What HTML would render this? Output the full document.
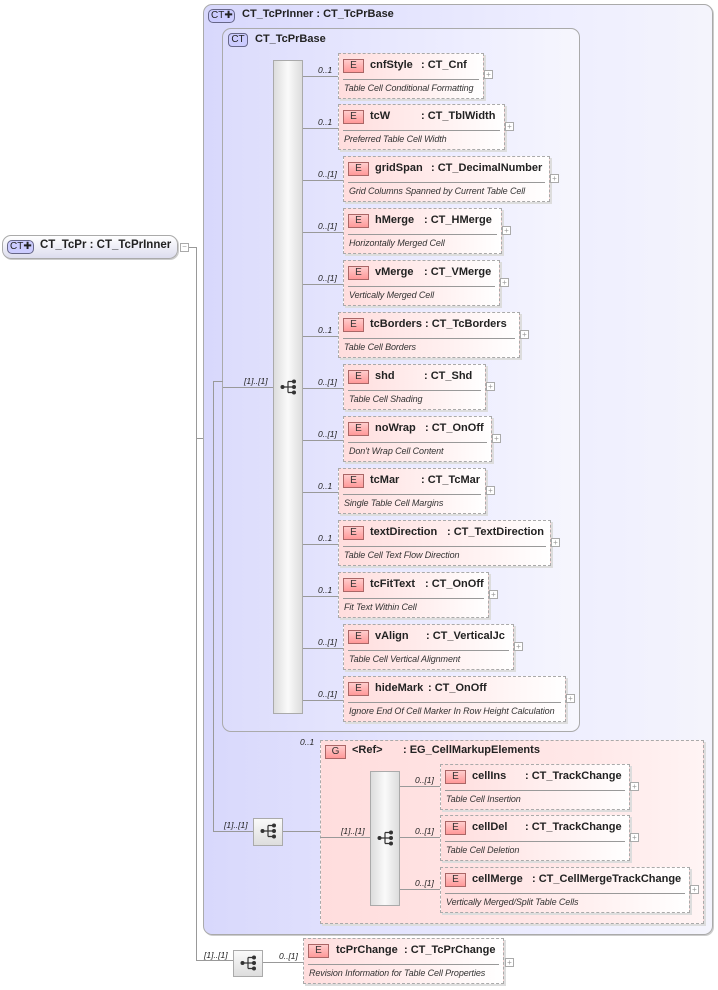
<!DOCTYPE html><html><head><meta charset="utf-8"><style>
*{margin:0;padding:0;box-sizing:border-box}
body{width:718px;height:990px;background:#fff;position:relative;overflow:hidden;font-family:"Liberation Sans",sans-serif;color:#222}
.a{position:absolute}
.el{position:absolute;height:46px;border:1px dashed #aaa;background:linear-gradient(90deg,#fdd 0%,#fff0f0 60%,#fff 100%);box-shadow:2px 2px 0 #ddd}
.b{position:absolute;left:4px;top:5px;width:21px;height:14px;border:1px solid #a66;background:linear-gradient(#fcc,#f99);font-size:10px;text-align:center;line-height:12px;color:#333}
.n{position:absolute;top:5px;font-size:11px;font-weight:bold;white-space:nowrap}
.l{position:absolute;left:4px;right:4px;top:25px;border-top:1px solid #999}
.d{position:absolute;left:5px;top:29px;font-size:9px;font-style:italic;white-space:nowrap;color:#333;letter-spacing:-0.1px}
.p{position:absolute;width:9px;height:9px;border:1px solid #aaa;background:#fff;font-size:8px;line-height:7px;text-align:center;color:#999}
.o{position:absolute;font-size:8.5px;font-style:italic;white-space:nowrap}
.h{position:absolute;height:1px;background:#999}
.v{position:absolute;width:1px;background:#999}
.seq{position:absolute;border:1px solid #aaa;background:linear-gradient(90deg,#ddd,#fafafa 50%,#ddd)}
.sq{position:absolute;width:30px;height:28px;border:1px solid #aaa;background:linear-gradient(#fafafa,#ddd)}
</style></head><body>
<svg width="0" height="0" style="position:absolute"><defs><g id="si"><circle cx="2.5" cy="8" r="2" fill="#333"/><path d="M2 8H8M8 2.5V13.5M8 2.5H14M8 8H14M8 13.5H14" stroke="#333" stroke-width="1.2" fill="none"/><circle cx="14" cy="2.5" r="2" fill="#333"/><circle cx="14" cy="8" r="2" fill="#333"/><circle cx="14" cy="13.5" r="2" fill="#333"/></g></defs></svg>

<div class="a" style="left:2px;top:235px;width:176px;height:24px;border:1px solid #aaa;border-radius:9px;background:linear-gradient(#fff,#dde);box-shadow:1px 1px 0 #ccc"></div>
<div class="a" style="left:7px;top:240px;width:27px;height:14px;border:1px solid #668;border-radius:5px;background:#ccf;font-size:10px;line-height:12px;padding-left:2px">CT✚</div>
<div class="a" style="left:40px;top:239px;font-size:11.5px;font-weight:bold">CT_TcPr : CT_TcPrInner</div>
<div class="p" style="left:180px;top:243px;line-height:5px">−</div>
<div class="h" style="left:189px;top:247px;width:7px"></div>
<div class="v" style="left:196px;top:247px;height:714px"></div>
<div class="h" style="left:196px;top:438px;width:8px"></div>

<div class="a" style="left:203px;top:4px;width:510px;height:931px;border:1px solid #aaa;border-radius:9px;background:linear-gradient(90deg,#d8d8fc,#eef 70%,#f4f4fc);box-shadow:1px 1px 0 #ccc"></div>
<div class="a" style="left:208px;top:9px;width:27px;height:14px;border:1px solid #668;border-radius:5px;background:#ccf;font-size:10px;line-height:12px;padding-left:2px">CT✚</div>
<div class="a" style="left:242px;top:8px;font-size:11px;font-weight:bold">CT_TcPrInner : CT_TcPrBase</div>
<div class="a" style="left:222px;top:28px;width:358px;height:704px;border:1px solid #aaa;border-radius:9px;background:linear-gradient(90deg,#dcdcfc,#eef 70%,#f6f6fd)"></div>
<div class="a" style="left:228px;top:33px;width:20px;height:14px;border:1px solid #668;border-radius:4px;background:#ccf;font-size:10px;line-height:12px;text-align:center">CT</div>
<div class="a" style="left:255px;top:33px;font-size:11px;font-weight:bold">CT_TcPrBase</div>

<div class="v" style="left:213px;top:381px;height:451px"></div>
<div class="h" style="left:213px;top:381px;width:10px"></div>
<div class="h" style="left:223px;top:387px;width:50px"></div>
<div class="o" style="left:244px;top:376px">[1]..[1]</div>
<div class="seq" style="left:273px;top:60px;width:30px;height:654px"></div>
<svg class="a" style="left:280px;top:379px" width="17" height="17"><use href="#si"/></svg>

<div class="h" style="left:303px;top:76px;width:35px"></div><div class="o" style="left:318px;top:65px">0..1</div>
<div class="el" style="left:338px;top:53px;width:146px"><div class="b">E</div><div class="n" style="left:31px">cnfStyle</div><div class="n" style="left:82px">: CT_Cnf</div><div class="l"></div><div class="d">Table Cell Conditional Formatting</div></div><div class="p" style="left:484px;top:70px">+</div>

<div class="h" style="left:303px;top:128px;width:35px"></div><div class="o" style="left:318px;top:117px">0..1</div>
<div class="el" style="left:338px;top:104px;width:167px"><div class="b">E</div><div class="n" style="left:31px">tcW</div><div class="n" style="left:82px">: CT_TblWidth</div><div class="l"></div><div class="d">Preferred Table Cell Width</div></div><div class="p" style="left:505px;top:122px">+</div>

<div class="h" style="left:303px;top:180px;width:40px"></div><div class="o" style="left:318px;top:169px">0..[1]</div>
<div class="el" style="left:343px;top:156px;width:207px"><div class="b">E</div><div class="n" style="left:31px">gridSpan</div><div class="n" style="left:87px">: CT_DecimalNumber</div><div class="l"></div><div class="d">Grid Columns Spanned by Current Table Cell</div></div><div class="p" style="left:550px;top:174px">+</div>

<div class="h" style="left:303px;top:232px;width:40px"></div><div class="o" style="left:318px;top:221px">0..[1]</div>
<div class="el" style="left:343px;top:208px;width:159px"><div class="b">E</div><div class="n" style="left:31px">hMerge</div><div class="n" style="left:80px">: CT_HMerge</div><div class="l"></div><div class="d">Horizontally Merged Cell</div></div><div class="p" style="left:502px;top:226px">+</div>

<div class="h" style="left:303px;top:284px;width:40px"></div><div class="o" style="left:318px;top:273px">0..[1]</div>
<div class="el" style="left:343px;top:260px;width:157px"><div class="b">E</div><div class="n" style="left:31px">vMerge</div><div class="n" style="left:80px">: CT_VMerge</div><div class="l"></div><div class="d">Vertically Merged Cell</div></div><div class="p" style="left:500px;top:278px">+</div>

<div class="h" style="left:303px;top:336px;width:35px"></div><div class="o" style="left:318px;top:325px">0..1</div>
<div class="el" style="left:338px;top:312px;width:182px"><div class="b">E</div><div class="n" style="left:31px">tcBorders</div><div class="n" style="left:86px">: CT_TcBorders</div><div class="l"></div><div class="d">Table Cell Borders</div></div><div class="p" style="left:520px;top:330px">+</div>

<div class="h" style="left:303px;top:388px;width:40px"></div><div class="o" style="left:318px;top:377px">0..[1]</div>
<div class="el" style="left:343px;top:364px;width:143px"><div class="b">E</div><div class="n" style="left:31px">shd</div><div class="n" style="left:80px">: CT_Shd</div><div class="l"></div><div class="d">Table Cell Shading</div></div><div class="p" style="left:486px;top:382px">+</div>

<div class="h" style="left:303px;top:440px;width:40px"></div><div class="o" style="left:318px;top:429px">0..[1]</div>
<div class="el" style="left:343px;top:416px;width:149px"><div class="b">E</div><div class="n" style="left:31px">noWrap</div><div class="n" style="left:81px">: CT_OnOff</div><div class="l"></div><div class="d">Don't Wrap Cell Content</div></div><div class="p" style="left:492px;top:434px">+</div>

<div class="h" style="left:303px;top:492px;width:35px"></div><div class="o" style="left:318px;top:481px">0..1</div>
<div class="el" style="left:338px;top:468px;width:148px"><div class="b">E</div><div class="n" style="left:31px">tcMar</div><div class="n" style="left:82px">: CT_TcMar</div><div class="l"></div><div class="d">Single Table Cell Margins</div></div><div class="p" style="left:486px;top:486px">+</div>

<div class="h" style="left:303px;top:544px;width:35px"></div><div class="o" style="left:318px;top:533px">0..1</div>
<div class="el" style="left:338px;top:520px;width:213px"><div class="b">E</div><div class="n" style="left:31px">textDirection</div><div class="n" style="left:108px">: CT_TextDirection</div><div class="l"></div><div class="d">Table Cell Text Flow Direction</div></div><div class="p" style="left:551px;top:538px">+</div>

<div class="h" style="left:303px;top:596px;width:35px"></div><div class="o" style="left:318px;top:585px">0..1</div>
<div class="el" style="left:338px;top:572px;width:151px"><div class="b">E</div><div class="n" style="left:31px">tcFitText</div><div class="n" style="left:86px">: CT_OnOff</div><div class="l"></div><div class="d">Fit Text Within Cell</div></div><div class="p" style="left:489px;top:590px">+</div>

<div class="h" style="left:303px;top:648px;width:40px"></div><div class="o" style="left:318px;top:637px">0..[1]</div>
<div class="el" style="left:343px;top:624px;width:171px"><div class="b">E</div><div class="n" style="left:31px">vAlign</div><div class="n" style="left:82px">: CT_VerticalJc</div><div class="l"></div><div class="d">Table Cell Vertical Alignment</div></div><div class="p" style="left:514px;top:642px">+</div>

<div class="h" style="left:303px;top:700px;width:40px"></div><div class="o" style="left:318px;top:689px">0..[1]</div>
<div class="el" style="left:343px;top:676px;width:223px"><div class="b">E</div><div class="n" style="left:31px">hideMark</div><div class="n" style="left:84px">: CT_OnOff</div><div class="l"></div><div class="d">Ignore End Of Cell Marker In Row Height Calculation</div></div><div class="p" style="left:566px;top:694px">+</div>

<div class="h" style="left:213px;top:831px;width:40px"></div>
<div class="o" style="left:224px;top:820px">[1]..[1]</div>
<div class="sq" style="left:253px;top:818px"></div>
<svg class="a" style="left:260px;top:823px" width="17" height="17"><use href="#si"/></svg>
<div class="h" style="left:283px;top:831px;width:37px"></div>
<div class="o" style="left:300px;top:737px">0..1</div>
<div class="el" style="left:320px;top:740px;width:384px;height:184px;background:linear-gradient(90deg,#fdd,#ffe8e8 70%,#fff4f4)"></div>
<div class="b" style="left:325px;top:745px">G</div>
<div class="n" style="left:352px;top:744px">&lt;Ref&gt;</div>
<div class="n" style="left:403px;top:744px">: EG_CellMarkupElements</div>
<div class="h" style="left:320px;top:837px;width:50px"></div>
<div class="o" style="left:341px;top:826px">[1]..[1]</div>
<div class="seq" style="left:370px;top:771px;width:30px;height:135px"></div>
<svg class="a" style="left:377px;top:830px" width="17" height="17"><use href="#si"/></svg>

<div class="h" style="left:400px;top:786px;width:40px"></div><div class="o" style="left:415px;top:775px">0..[1]</div>
<div class="el" style="left:440px;top:764px;width:190px"><div class="b">E</div><div class="n" style="left:31px">cellIns</div><div class="n" style="left:84px">: CT_TrackChange</div><div class="l"></div><div class="d">Table Cell Insertion</div></div><div class="p" style="left:630px;top:782px">+</div>

<div class="h" style="left:400px;top:837px;width:40px"></div><div class="o" style="left:415px;top:826px">0..[1]</div>
<div class="el" style="left:440px;top:815px;width:190px"><div class="b">E</div><div class="n" style="left:31px">cellDel</div><div class="n" style="left:84px">: CT_TrackChange</div><div class="l"></div><div class="d">Table Cell Deletion</div></div><div class="p" style="left:630px;top:833px">+</div>

<div class="h" style="left:400px;top:889px;width:40px"></div><div class="o" style="left:415px;top:878px">0..[1]</div>
<div class="el" style="left:440px;top:867px;width:250px"><div class="b">E</div><div class="n" style="left:31px">cellMerge</div><div class="n" style="left:91px">: CT_CellMergeTrackChange</div><div class="l"></div><div class="d">Vertically Merged/Split Table Cells</div></div><div class="p" style="left:690px;top:885px">+</div>

<div class="h" style="left:196px;top:960px;width:37px"></div>
<div class="o" style="left:204px;top:950px">[1]..[1]</div>
<div class="sq" style="left:233px;top:950px;height:27px"></div>
<svg class="a" style="left:240px;top:955px" width="17" height="17"><use href="#si"/></svg>
<div class="h" style="left:263px;top:962px;width:40px"></div><div class="o" style="left:279px;top:951px">0..[1]</div>
<div class="el" style="left:303px;top:938px;width:201px"><div class="b">E</div><div class="n" style="left:32px">tcPrChange</div><div class="n" style="left:100px">: CT_TcPrChange</div><div class="l"></div><div class="d">Revision Information for Table Cell Properties</div></div><div class="p" style="left:505px;top:958px">+</div>
</body></html>
